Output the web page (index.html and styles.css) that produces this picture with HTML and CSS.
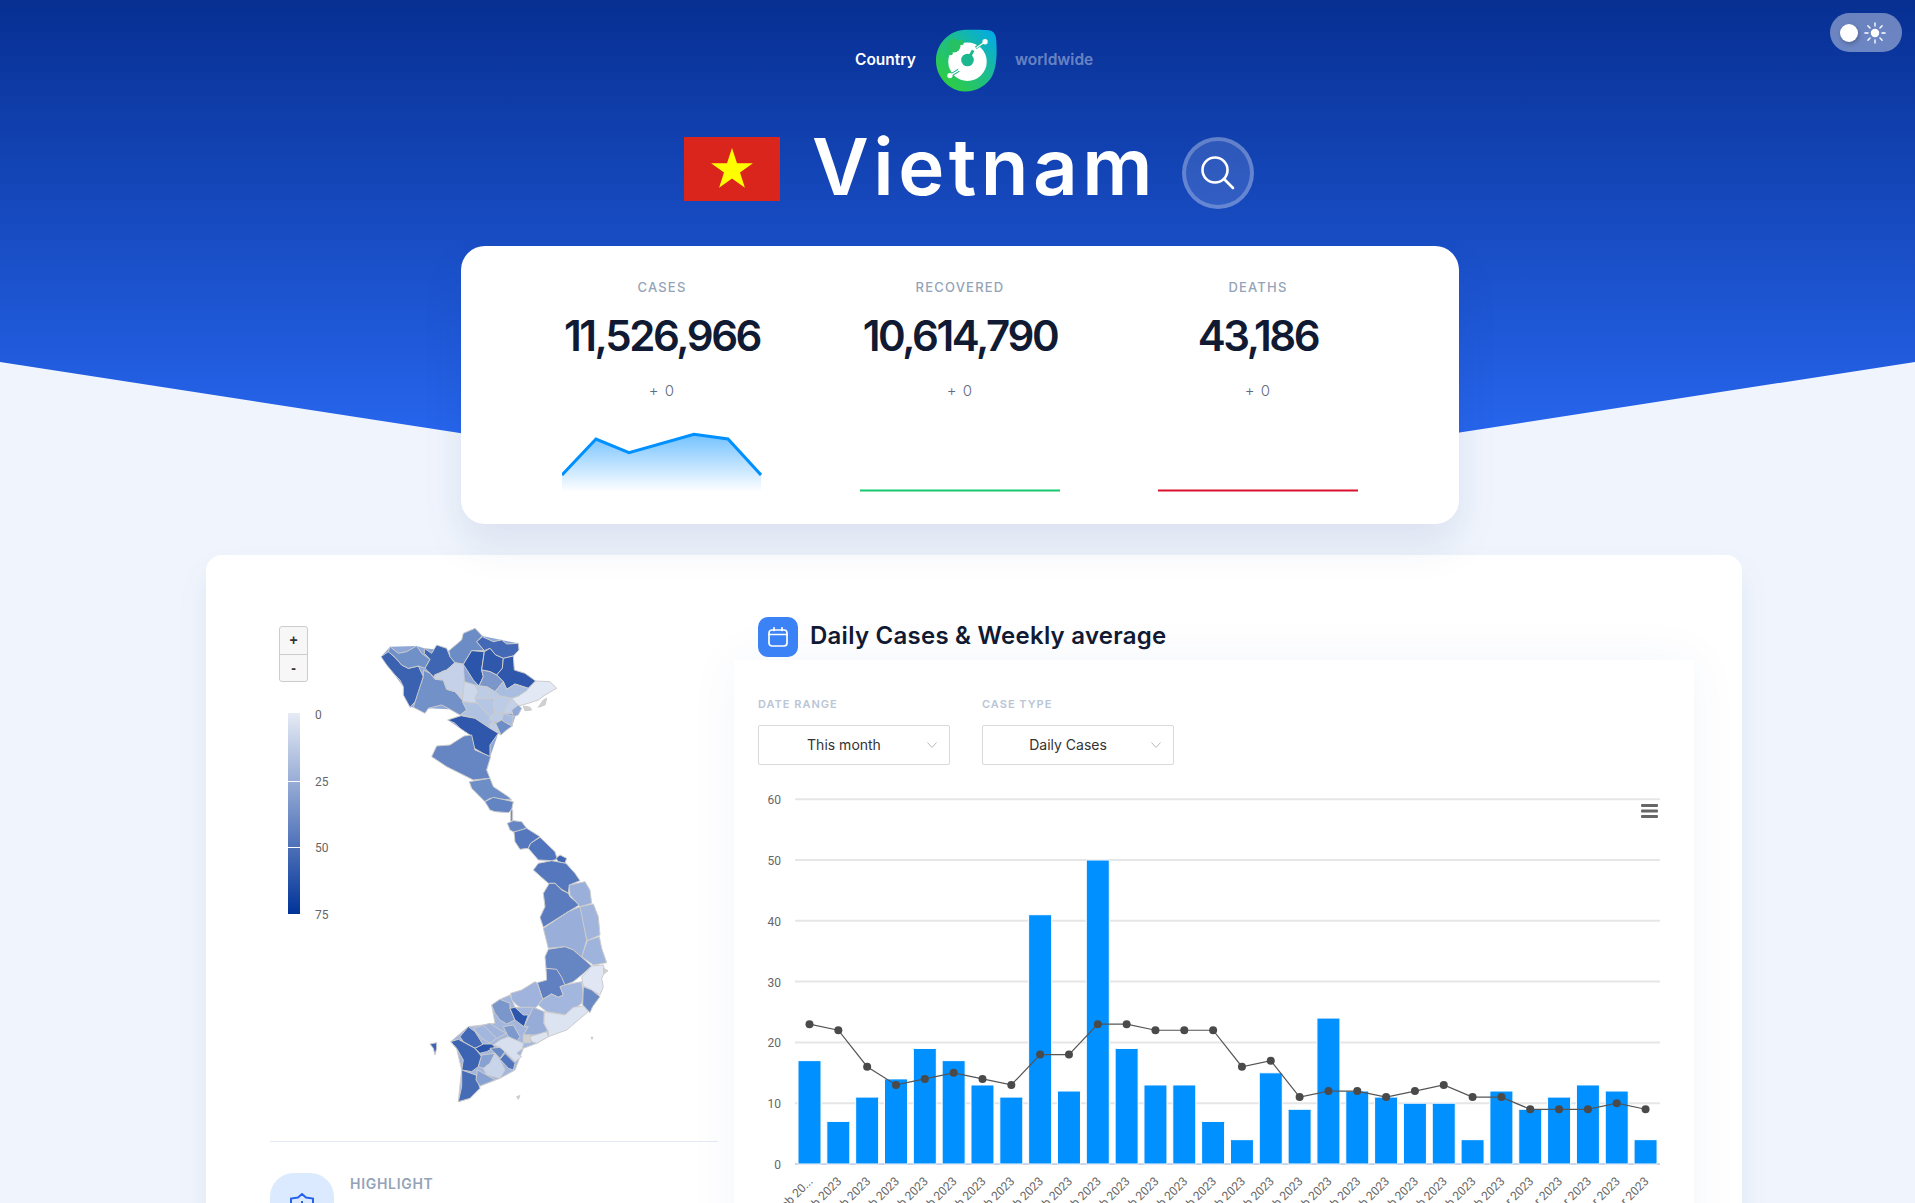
FILE: index.html
```html
<!DOCTYPE html>
<html lang="en">
<head>
    <meta charset="UTF-8">
    <meta name="viewport" content="width=device-width, initial-scale=1.0">
    <title>Vietnam</title>
    <link rel="stylesheet" href="styles.css">
</head>
<body>
    <header class="hero">
        <div class="theme-toggle">
            <span class="knob"></span>
            <svg class="sun" viewBox="0 0 24 24" width="22" height="22">
                <circle cx="12" cy="12" r="4.6" fill="#fff"/>
                <path d="M12 1v3.4M12 19.6V23M1 12h3.4M19.6 12H23M4.2 4.2l2.4 2.4M17.4 17.4l2.4 2.4M4.2 19.8l2.4-2.4M17.4 6.6l2.4-2.4" stroke="#fff" stroke-width="1.5" stroke-linecap="round"/>
            </svg>
        </div>

        <nav class="switcher">
            <span class="switch-on">Country</span>
            <svg class="logo" viewBox="30 20 184 192" width="61" height="64">
                <defs>
                    <linearGradient id="logoFill" x1="0" y1="1" x2="1" y2="0">
                        <stop offset="0.1" stop-color="#2fce3c"/>
                        <stop offset="0.55" stop-color="#1dbd8c"/>
                        <stop offset="1" stop-color="#00a9f0"/>
                    </linearGradient>
                </defs>
                <path fill="url(#logoFill)" d="M120 22C150 22 175 21 192 24C206 26 212 40 212 60C214 90 214 130 200 160C185 190 150 210 115 208C70 205 30 165 30 115C30 65 70 22 120 22Z"/>
                <circle cx="125" cy="118" r="58" fill="#fff"/>
                <circle cx="84" cy="70" r="20" fill="#25c162"/>
                <circle cx="106" cy="60" r="8" fill="#25c162"/>
                <circle cx="74" cy="92" r="7" fill="#25c162"/>
                <circle cx="125" cy="113" r="19" fill="#1bb78f"/>
                <path d="M132 102L142 84" stroke="#1bb78f" stroke-width="9"/>
                <path d="M150 76L178 58" stroke="#1bb78f" stroke-width="9"/>
                <path d="M152 76L178 58" stroke="#fff" stroke-width="4"/>
                <circle cx="178" cy="58" r="8" fill="#fff"/>
                <path d="M108 138L72 160" stroke="#1bb78f" stroke-width="10"/>
                <path d="M105 140L72 160" stroke="#fff" stroke-width="4"/>
                <circle cx="105" cy="140" r="8" fill="#fff"/>
                <circle cx="72" cy="160" r="8" fill="#fff"/>
            </svg>
            <span class="switch-off">worldwide</span>
        </nav>

        <div class="title-row">
            <svg class="flag" viewBox="0 0 96 64" width="96" height="64">
                <rect width="96" height="64" fill="#da251d"/>
                <polygon fill="#ff0" points="48,11 53,26.2 68.9,26.2 56,35.6 60.9,50.8 48,41.4 35.1,50.8 40,35.6 27.1,26.2 43,26.2"/>
            </svg>
            <h1 class="country-name">Vietnam</h1>
            <button class="search-btn">
                <svg viewBox="0 0 40 40" width="40" height="40" fill="none" stroke="#fff" stroke-width="2.6" stroke-linecap="round">
                    <circle cx="17" cy="17" r="12.5"/>
                    <path d="M26.5 26.5L35 35"/>
                </svg>
            </button>
        </div>

        <section class="stats-card">
            <div class="stat">
                <div class="stat-label">CASES</div>
                <div class="stat-value">11,526,966</div>
                <div class="stat-delta">+ 0</div>
                <svg class="spark" viewBox="0 0 200 64" width="200" height="64">
                    <defs>
                        <linearGradient id="sparkFill" x1="0" y1="0" x2="0" y2="1">
                            <stop offset="0" stop-color="#0090ff" stop-opacity="0.55"/>
                            <stop offset="1" stop-color="#0090ff" stop-opacity="0"/>
                        </linearGradient>
                    </defs>
                    <path fill="url(#sparkFill)" d="M0 44L34 8L67 21.7L132 3.3L166 8L199 44V61H0Z"/>
                    <path class="spark-line blue" d="M0 44L34 8L67 21.7L132 3.3L166 8L199 44"/>
                </svg>
            </div>
            <div class="stat">
                <div class="stat-label">RECOVERED</div>
                <div class="stat-value">10,614,790</div>
                <div class="stat-delta">+ 0</div>
                <svg class="spark" viewBox="0 0 200 64" width="200" height="64">
                    <path class="spark-line green" d="M0 59.5H200"/>
                </svg>
            </div>
            <div class="stat">
                <div class="stat-label">DEATHS</div>
                <div class="stat-value">43,186</div>
                <div class="stat-delta">+ 0</div>
                <svg class="spark" viewBox="0 0 200 64" width="200" height="64">
                    <path class="spark-line red" d="M0 59.5H200"/>
                </svg>
            </div>
        </section>
    </header>

    <main class="main-card">
        <div class="left-col">
            <div class="map-box">
                <div class="zoom-ctrl">
                    <div class="zoom-btn">+</div>
                    <div class="zoom-btn">-</div>
                </div>
                <div class="legend">
                    <div class="legend-bar"><span></span><span></span></div>
                    <div class="legend-nums"><span>0</span><span>25</span><span>50</span><span>75</span></div>
                </div>
                <svg class="map" viewBox="270 617 448 524" width="448" height="524">
                    <!-- north -->
                    <g transform="translate(375 620) scale(.3333)">
                        <polygon class="backing" fill="#8ea7d6" points="18,110 45,80 125,78 148,85 222,92 300,25 322,48 430,70 415,108 418,150 482,183 430,258 412,318 370,340 345,412 290,380 285,345 218,300 258,287 225,268 160,265 150,280 115,262 105,262 85,200"/>
                        <polygon fill="#3a62b0" points="18,110 40,95 60,112 80,135 100,145 130,138 145,170 135,210 125,240 105,262 85,225 85,200 75,180 60,165 35,135"/>
                        <polygon fill="#7090c8" points="40,95 45,80 70,100 95,95 125,78 140,100 165,118 150,145 130,138 100,145 80,135 60,112"/>
                        <polygon fill="#3f66b3" points="148,85 170,100 185,75 215,85 225,110 240,128 215,150 200,155 180,175 165,160 150,145 165,118 148,100"/>
                        <polygon fill="#6b8cc5" points="222,92 260,60 265,40 300,25 322,48 305,65 328,92 290,92 265,133 240,128 225,110"/>
                        <polygon fill="#4368b5" points="305,65 322,50 355,65 380,60 395,72 430,70 432,90 415,108 385,115 362,105 345,85 328,92"/>
                        <polygon fill="#2a55ab" points="290,92 328,95 320,150 325,170 312,198 295,180 265,133"/>
                        <polygon fill="#2f58ac" points="328,95 345,85 362,105 385,115 382,145 365,165 345,155 320,150"/>
                        <polygon fill="#2f58ac" points="385,115 415,108 418,150 450,160 482,183 460,205 420,192 395,208 385,185 365,165 382,145"/>
                        <polygon fill="#7a96cb" points="320,150 345,155 365,165 385,185 360,215 335,200 312,198 325,170"/>
                        <polygon fill="#7391c9" points="145,150 165,160 180,178 205,180 215,208 240,215 262,240 275,270 255,285 225,268 200,255 160,265 150,280 115,262 130,215 145,170"/>
                        <polygon fill="#c5d1e8" points="178,165 215,150 240,128 265,133 268,185 262,240 240,215 215,208 205,180 180,178"/>
                        <polygon fill="#ced8eb" points="268,185 300,195 310,215 300,235 310,250 265,245 262,240"/>
                        <polygon fill="#bccbe6" points="300,195 312,198 335,200 345,235 300,235 310,215"/>
                        <polygon fill="#e2e8f4" points="482,183 525,185 545,205 510,225 490,240 460,250 430,258 410,235 430,228 460,205"/>
                        <polygon fill="#a9bde0" points="360,215 385,185 395,208 420,192 460,205 455,212 430,228 410,235 375,228"/>
                        <polygon fill="#bccbe6" points="335,200 360,215 375,228 355,240 345,235"/>
                        <polygon fill="#b5c6e4" points="300,235 345,235 355,250 360,280 345,290 325,270 305,250"/>
                        <polygon fill="#bccbe6" points="355,240 375,228 410,235 395,258 385,280 360,280 355,250"/>
                        <polygon fill="#c3d0e9" points="395,258 410,235 430,258 415,280 385,280"/>
                        <polygon fill="#8ea7d6" points="410,270 430,255 440,265 430,285 415,290"/>
                        <polygon fill="#d0d0d0" points="490,262 505,240 515,235 510,255"/>
                        <polygon fill="#d0d0d0" points="445,258 465,262 470,270 450,272"/>
                        <polygon fill="#b0c2e2" points="262,245 310,250 325,270 345,290 345,310 375,340 345,325 300,295 258,285 275,270"/>
                        <polygon fill="#a6bbdf" points="385,280 415,290 412,318 395,310 380,300"/>
                        <polygon fill="#bccbe6" points="345,290 360,280 385,280 380,300 350,310"/>
                        <polygon fill="#c0cde7" points="345,310 362,310 378,345 345,325"/>
                        <polygon fill="#6d8dc6" points="362,310 380,300 395,310 412,318 395,330 378,345"/>
                        <polygon fill="#2f58ac" points="218,300 258,287 300,295 345,325 370,340 345,375 345,412 290,380 285,345 255,325 240,310"/>
                    </g>
                    <!-- north central coast -->
                    <g transform="translate(260 610) scale(.3333)">
                        <polygon fill="#6685c3" points="515,440 530,408 570,405 612,378 635,375 645,420 692,440 680,480 690,505 640,510 600,490 560,470"/>
                        <polygon fill="#6d8dc6" points="628,515 690,505 700,530 745,560 755,570 690,565 675,575 650,550 635,535"/>
                        <polygon fill="#6284c2" points="675,575 700,562 760,575 755,600 745,608 705,605 690,600"/>
                        <polygon fill="#6685c3" points="752,600 758,600 758,634 752,634"/>
                        <polygon fill="#6685c3" points="742,640 760,632 785,635 800,655 765,668 750,660"/>
                        <polygon fill="#5577bd" points="762,666 800,655 840,680 812,700 805,715 780,718 765,695"/>
                        <polygon fill="#5175bc" points="805,715 812,700 840,682 885,725 892,748 875,752 835,750"/>
                        <polygon fill="#3f66b3" points="888,745 900,735 920,745 915,760 895,755"/>
                    </g>
                    <!-- central highlands -->
                    <g transform="translate(480 840) scale(.3333)">
                        <polygon fill="#5577bd" points="160,90 175,70 215,62 258,70 285,100 300,122 268,135 265,160 245,148 225,130 205,130"/>
                        <polygon fill="#5a7cbf" points="190,160 208,130 225,130 245,150 265,160 270,170 298,195 265,215 190,262 180,232 195,200"/>
                        <polygon fill="#9aafda" points="268,135 315,125 330,150 335,190 300,200 270,165"/>
                        <polygon fill="#a0b4dc" points="300,200 340,192 355,230 360,285 322,302 305,245"/>
                        <polygon fill="#9fb4dc" points="322,302 358,290 365,325 380,368 340,375 305,350"/>
                        <polygon fill="#99aed9" points="190,265 265,215 300,200 320,300 305,352 280,330 255,320 205,325"/>
                        <polygon fill="#6685c3" points="205,328 255,320 280,330 305,352 335,378 305,405 280,425 255,435 235,410 230,390 198,385 195,350"/>
                        <polygon fill="#6080c2" points="198,385 230,388 245,412 255,435 240,440 250,465 235,472 215,462 188,478 172,428 200,420"/>
                        <polygon fill="#9fb3dc" points="92,460 125,450 165,425 172,430 188,478 175,495 150,520 110,495 95,480"/>
                        <polygon fill="#a3b6dd" points="188,478 215,462 235,472 250,465 240,440 255,435 305,425 310,465 305,490 260,525 200,515 175,495"/>
                        <polygon fill="#e0e6f3" points="305,412 335,378 370,375 375,395 365,415 370,440 360,465 335,450 310,438"/>
                        <polygon fill="#6a8ac6" points="310,440 335,450 360,470 338,500 330,518 308,495"/>
                        <polygon fill="#d0d0d0" points="370,385 384,392 372,402"/>
                    </g>
                    <!-- south -->
                    <g transform="translate(400 920) scale(.3333)">
                        <polygon fill="#a3b7de" points="275,255 300,238 330,225 345,262 400,262 445,335 445,350 410,370 370,385 345,450 300,475 240,498 210,535 175,545 185,450 170,385 152,365 205,320 250,315 285,310"/>
                        <polygon fill="#7a96cb" points="275,255 300,238 330,250 330,265 345,300 320,312 300,300 285,280"/>
                        <polygon fill="#97add8" points="372,320 400,262 433,275 432,310 445,335 410,345 370,345 385,320"/>
                        <polygon fill="#dde4f1" points="433,275 495,285 520,262 550,258 565,275 500,330 445,350 445,335 432,310"/>
                        <polygon fill="#2c56ab" points="330,265 345,262 370,285 385,285 372,320 345,300"/>
                        <polygon fill="#dde4f1" points="390,350 440,335 445,350 410,370 395,365"/>
                        <polygon fill="#d0d0d0" points="370,345 390,345 392,368 370,368"/>
                        <polygon fill="#a3b7de" points="220,325 250,315 280,340 290,355 270,370 245,355"/>
                        <polygon fill="#9fb3dc" points="250,315 270,310 300,330 320,340 290,355"/>
                        <polygon fill="#7e99cd" points="310,320 340,315 360,350 350,365 325,350"/>
                        <polygon fill="#4368b5" points="180,350 205,320 225,335 250,375 225,385 190,365"/>
                        <polygon fill="#3d64b2" points="152,365 175,358 225,385 245,410 235,440 215,455 185,450 190,420 170,385"/>
                        <polygon fill="#466cb6" points="185,450 228,465 240,505 210,535 175,545 185,500"/>
                        <polygon fill="#88a1d3" points="232,450 260,465 285,480 240,498 228,480"/>
                        <polygon fill="#2c56ab" points="225,385 250,372 275,372 285,382 260,395 240,400"/>
                        <polygon fill="#6a8ac6" points="270,385 300,382 315,395 300,415 285,400"/>
                        <polygon fill="#88a1d3" points="245,405 285,400 270,430 250,445 235,440"/>
                        <polygon fill="#c8d4ea" points="285,400 300,420 315,450 300,475 260,465 250,445 270,430"/>
                        <polygon fill="#d8e0f0" points="280,375 300,360 325,350 370,370 368,385 350,400 365,410 345,425 315,395 300,382"/>
                        <polygon fill="#5175bc" points="300,418 315,400 345,430 340,450 325,445"/>
                        <polygon fill="#3d64b2" points="90,372 110,368 110,385 105,405 100,385"/>
                        <polygon fill="#d0d0d0" points="350,530 360,527 355,538"/>
                        <polygon fill="#d0d0d0" points="573,352 579,352 576,358"/>
                    </g>
                </svg>
            </div>
            <div class="highlight">
                <div class="highlight-icon">
                    <svg viewBox="0 0 24 28" width="24" height="28" fill="none" stroke="#2563eb" stroke-width="2">
                        <path d="M12 1L16 4.5L23 5.5V14C23 20 18 24.5 12 27C6 24.5 1 20 1 14V5.5L8 4.5Z"/>
                        <path d="M12 8V13"/>
                    </svg>
                </div>
                <div class="highlight-label">HIGHLIGHT</div>
            </div>
        </div>

        <div class="right-col">
            <div class="chart-head">
                <span class="head-icon">
                    <svg viewBox="0 0 20 20" width="20" height="20" fill="none" stroke="#fff" stroke-width="1.7" stroke-linecap="round">
                        <rect x="1" y="3" width="18" height="16" rx="3"/>
                        <path d="M1 7.5H19M6 .8V3.5M14 .8V3.5"/>
                    </svg>
                </span>
                <h2 class="chart-title">Daily Cases &amp; Weekly average</h2>
            </div>
            <div class="chart-panel">
                <div class="filters">
                    <div class="filter">
                        <label class="filter-label">DATE RANGE</label>
                        <div class="select">
                            <span class="select-text">This month</span>
                            <svg viewBox="0 0 10 6" width="10" height="6" fill="none" stroke="#bbb"><path d="M.5 .5L5 5.5L9.5 .5"/></svg>
                        </div>
                    </div>
                    <div class="filter">
                        <label class="filter-label">CASE TYPE</label>
                        <div class="select">
                            <span class="select-text">Daily Cases</span>
                            <svg viewBox="0 0 10 6" width="10" height="6" fill="none" stroke="#bbb"><path d="M.5 .5L5 5.5L9.5 .5"/></svg>
                        </div>
                    </div>
                </div>
                <svg id="chart" class="chart" viewBox="734 780 960 440" width="960" height="440"></svg>
            </div>
        </div>
    </main>

    <script src="chart.js"></script>
</body>
</html>
```

FILE: styles.css
```css
* { box-sizing: border-box; }
html, body { margin: 0; height: 1203px; overflow: hidden; }
body { font-family: Inter, "Liberation Sans", sans-serif; background-color: #f0f5fd; color: #111a33; }

/* header */
.hero { position: relative; height: 524px; }
.hero::before { content: ""; position: absolute; left: 0; top: 0; width: 100%; height: 510px; background: linear-gradient(#072f92, #2766ee 440px); clip-path: polygon(0 0, 100% 0, 100% 362px, 50% 510px, 0 362px); }

.theme-toggle { position: absolute; top: 13px; right: 13px; width: 72px; height: 39px; border-radius: 20px; background-color: rgba(255, 255, 255, 0.4); display: flex; align-items: center; gap: 6px; padding-left: 10px; }
.knob { width: 18px; height: 18px; border-radius: 50%; background-color: #fff; box-shadow: 1px 2px 4px rgba(0, 0, 0, 0.25); }

.switcher { position: relative; display: flex; align-items: center; height: 64px; padding: 29px 0 0 855px; box-sizing: content-box; font-size: 15.5px; font-weight: 600; }
.switch-on { color: #fff; width: 81px; margin-bottom: 4px; }
.switch-off { color: rgba(255, 255, 255, 0.4); margin-left: 18px; margin-bottom: 4px; }
.logo { display: block; }

.title-row { position: relative; display: flex; align-items: flex-start; padding: 44px 0 0 684px; }
.flag { display: block; }
.country-name { margin: -16px 0 0 32px; width: 370px; font-size: 78px; line-height: 92px; font-weight: 600; color: #fff; letter-spacing: 4.5px; }
.search-btn { width: 72px; height: 72px; padding: 0; border: 4px solid rgba(255, 255, 255, 0.25); border-radius: 50%; background-color: rgba(255, 255, 255, 0.12); display: flex; align-items: center; justify-content: center; }

.stats-card { position: absolute; top: 246px; left: 461px; width: 998px; height: 278px; padding: 34px 52px 0; background-color: #fff; border-radius: 24px; box-shadow: 0 20px 40px rgba(30, 60, 120, 0.1); display: grid; grid-template-columns: repeat(3, 1fr); }
.stat { display: flex; flex-direction: column; align-items: center; }
.stat-label { font-size: 13px; line-height: 14px; font-weight: 500; letter-spacing: 1.2px; color: #94a3b8; }
.stat-value { margin-top: 17px; font-size: 42px; line-height: 50px; font-weight: 600; letter-spacing: -2.4px; color: #111a33; }
.stat-delta { margin-top: 20px; font-size: 15px; line-height: 20px; font-weight: 300; letter-spacing: 1px; color: #5f6b80; }
.spark { display: block; margin-top: 30px; }
.spark-line { fill: none; stroke-width: 2.5; }
.spark-line.blue { stroke: #0090ff; stroke-width: 3; }
.spark-line.green { stroke: #16c96e; stroke-width: 2; }
.spark-line.red { stroke: #d9112f; stroke-width: 2; }

/* main card */
.main-card { margin: 31px 0 0 206px; width: 1536px; height: 800px; padding: 62px 48px 0 64px; background-color: #fff; border-radius: 16px; box-shadow: 0 16px 32px rgba(30, 60, 120, 0.07); display: flex; gap: 16px; }
.left-col { width: 448px; flex-shrink: 0; }
.map-box { position: relative; height: 525px; border-bottom: 1px solid #e2e8f4; }
.map { display: block; }
.map polygon { stroke: #cccccc; stroke-width: 1; vector-effect: non-scaling-stroke; }
.map .backing { stroke-width: 0; }
.zoom-ctrl { position: absolute; top: 9px; left: 9px; width: 29px; border: 1px solid #ccc; border-radius: 3px; background-color: #f7f7f7; }
.zoom-btn { height: 27px; text-align: center; font: bold 14px/26px "Liberation Sans", sans-serif; color: #333; }
.zoom-btn + .zoom-btn { border-top: 1px solid #ccc; }
.legend { position: absolute; top: 96px; left: 18px; display: flex; gap: 15px; z-index: 1; }
.legend-bar { position: relative; width: 12px; height: 201px; background: linear-gradient(#e6ebf5, #003399); }
.legend-bar span { display: block; position: absolute; left: 0; width: 100%; height: 1px; background-color: #fff; }
.legend-bar span:first-child { top: 68px; }
.legend-bar span:last-child { top: 134px; }
.legend-nums { display: flex; flex-direction: column; justify-content: space-between; margin-top: -5px; font: 12px/14px Roboto, sans-serif; color: #666; height: 214px; }

.highlight { display: flex; gap: 16px; margin-top: 31px; }
.highlight-icon { width: 64px; height: 64px; border-radius: 24px; background-color: #dbeafe; display: flex; justify-content: center; padding-top: 20px; }
.highlight-label { margin-top: 1px; font-size: 14px; line-height: 20px; font-weight: 600; letter-spacing: 0.7px; color: #94a3b8; }

.right-col { width: 960px; }
.chart-head { display: flex; align-items: center; gap: 12px; padding-left: 24px; height: 40px; }
.head-icon { width: 40px; height: 40px; border-radius: 10px; background-color: #3b82f6; display: flex; align-items: center; justify-content: center; }
.chart-title { margin: -4px 0 0; font-size: 24px; font-weight: 600; letter-spacing: 0.25px; color: #111a33; }
.chart-panel { margin-top: 3px; height: 700px; box-shadow: 0 0 48px rgba(40, 80, 180, 0.05); }
.filters { display: flex; gap: 32px; padding: 37px 24px 15px; }
.filter { width: 192px; }
.filter-label { display: block; height: 28px; font-size: 11px; line-height: 14px; font-weight: 600; letter-spacing: 1px; color: #bac5d6; }
.select { display: flex; align-items: center; height: 40px; padding: 0 12px 0 2px; border: 1px solid #d9d9d9; border-radius: 2px; background-color: #fff; }
.select-text { flex: 1; text-align: center; font-size: 14px; margin-top: -2px; color: #333; }

.chart { display: block; }
.grid-line { stroke: #e6e6e6; stroke-width: 2; }
.axis-line { stroke: #ccd6eb; stroke-width: 2; }
.bar { fill: #0090ff; stroke: #fff; stroke-width: 1; }
.avg-line { fill: none; stroke: #555; stroke-width: 1.2; }
.avg-dot { fill: #4a4a4a; }
.axis-text { font: 12px Roboto, sans-serif; fill: #666; }
.menu-bar { fill: #666; }
```

FILE: chart.js
```js
// daily bars and weekly average, one entry per day from 04 Feb 2023
const daily = [17, 7, 11, 14, 19, 17, 13, 11, 41, 12, 50, 19, 13, 13, 7, 4, 15, 9, 24, 12, 11, 10, 10, 4, 12, 9, 11, 13, 12, 4];
const weekly = [23, 22, 16, 13, 14, 15, 14, 13, 18, 18, 23, 23, 22, 22, 22, 16, 17, 11, 12, 12, 11, 12, 13, 11, 11, 9, 9, 9, 10, 9];

const chart = document.getElementById('chart');
const NS = 'http://www.w3.org/2000/svg';
const baseY = 1164;
const unit = 6.08;
const step = 28.83;
const firstX = 798;
const barW = 23;

function add(tag, attrs, text) {
    const el = document.createElementNS(NS, tag);
    for (const key in attrs) el.setAttribute(key, attrs[key]);
    if (text !== undefined) el.textContent = text;
    chart.appendChild(el);
    return el;
}

for (let v = 60; v >= 0; v -= 10) {
    const y = baseY - v * unit;
    add('line', { class: v === 0 ? 'axis-line' : 'grid-line', x1: 795, x2: 1660, y1: y, y2: y });
    add('text', { class: 'axis-text', x: 781, y: y + 5, 'text-anchor': 'end' }, v);
}

daily.forEach((v, i) => {
    const h = v * unit;
    add('rect', { class: 'bar', x: firstX + i * step, y: baseY - h, width: barW, height: h, rx: 1 });
});

const points = weekly.map((v, i) => [firstX + barW / 2 + i * step, baseY - v * unit]);
add('polyline', { class: 'avg-line', points: points.map(p => p.join(',')).join(' ') });
points.forEach(p => add('circle', { class: 'avg-dot', cx: p[0], cy: p[1], r: 4 }));

daily.forEach((v, i) => {
    const day = i + 4;
    let label = day <= 28 ? String(day).padStart(2, '0') + ' Feb 2023' : String(day - 28).padStart(2, '0') + ' Mar 2023';
    if (i === 0) label = '04 Feb 20...';
    const x = firstX + barW / 2 + i * step + 4;
    add('text', { class: 'axis-text', x: x, y: 1182, 'text-anchor': 'end', transform: 'rotate(-45 ' + x + ' 1182)' }, label);
});

[804, 809.5, 815].forEach(y => add('rect', { class: 'menu-bar', x: 1641, y: y, width: 17, height: 3, rx: 1 }));
```
